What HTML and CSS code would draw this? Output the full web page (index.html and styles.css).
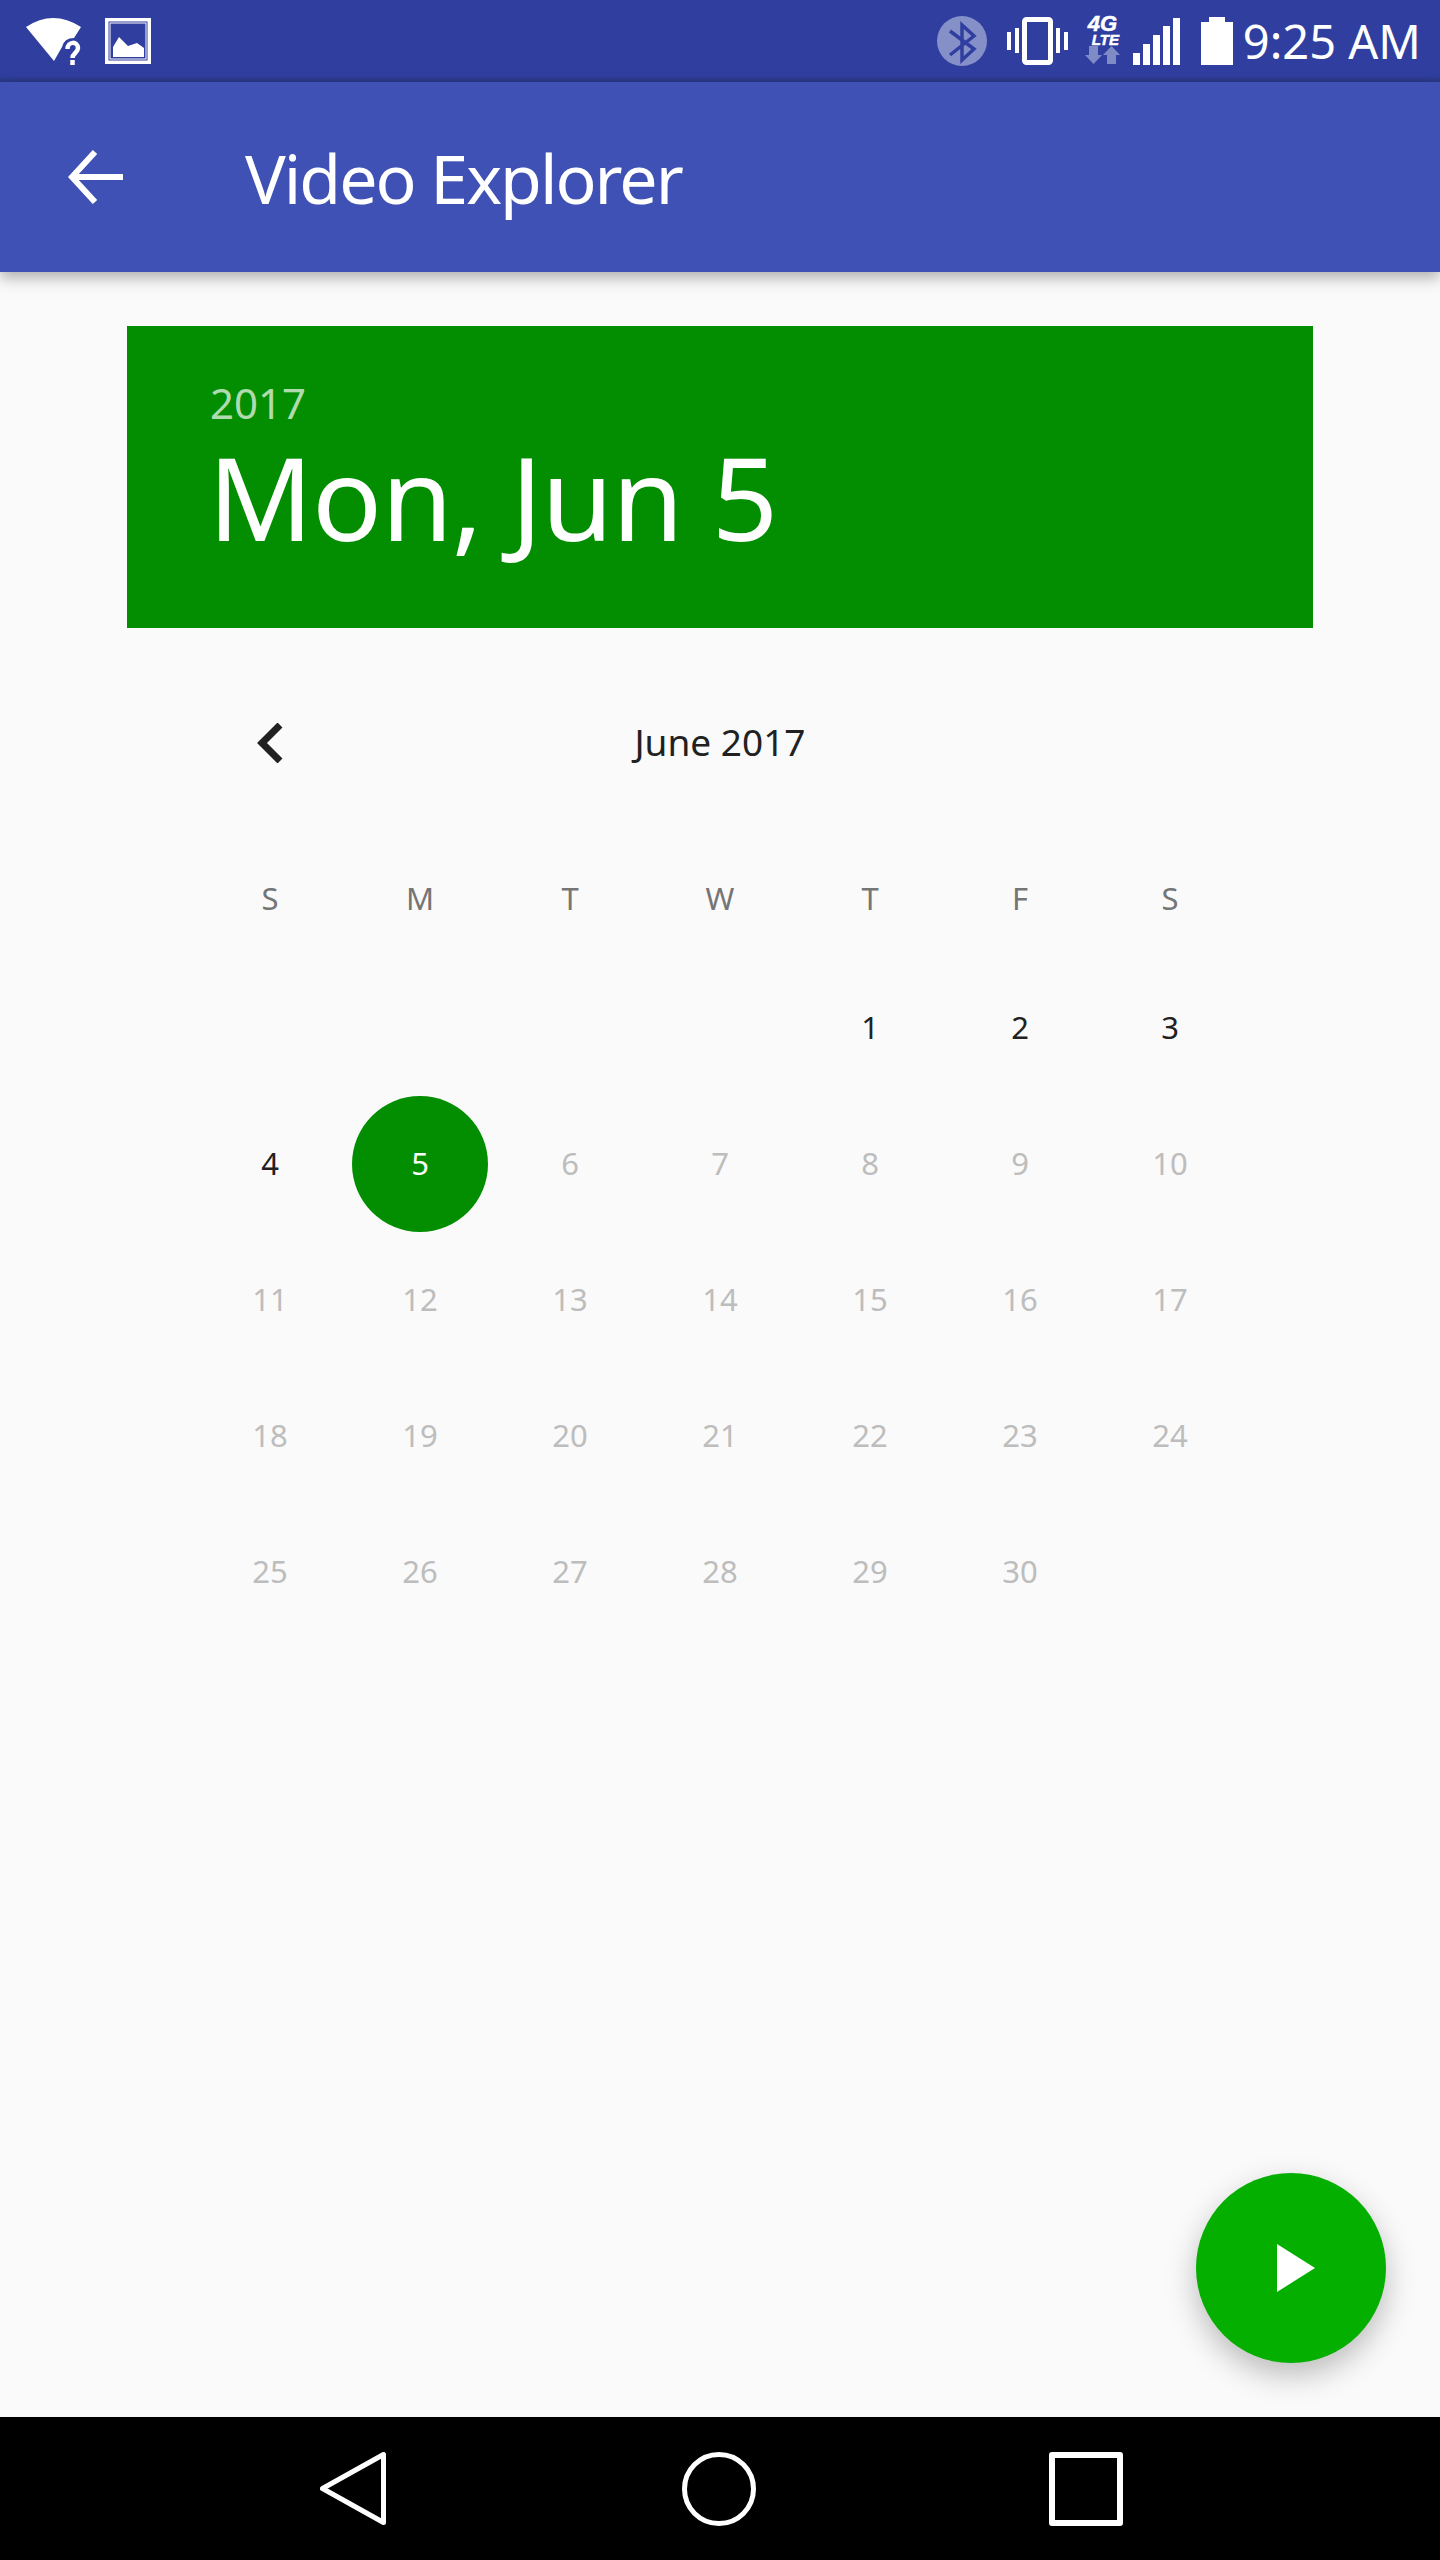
FILE: index.html
```html
<!DOCTYPE html>
<html lang="en">
<head>
    <meta charset="UTF-8">
    <title>Video Explorer</title>
    <link rel="stylesheet" href="styles.css">
</head>
<body>
    <div class="screen">
        <div class="status-bar">
            <div class="status-left">
                <svg class="icon-wifi" width="56" height="48" viewBox="0 0 56 48">
                    <path d="M0 10Q27 -8 55 10L48 21Q38 21 36 30L28 44Z" fill="#fff"/>
                    <path d="M41.500 32C41.500 24 52 24 52 31C52 36 46.500 36 46.500 41M46.500 43v5" fill="none" stroke="#fff" stroke-width="4.500"/>
                </svg>
                <svg class="icon-image" width="46" height="46" viewBox="0 0 46 46">
                    <rect x="1.750" y="1.750" width="42.500" height="42.500" fill="none" stroke="#fff" stroke-width="3.500"/>
                    <rect x="5" y="5" width="36" height="36" fill="none" stroke="#fff" stroke-width="1"/>
                    <path d="M8 39V29L14 19L23 28L32 25L39 30V39Z" fill="#fff"/>
                </svg>
            </div>
            <div class="status-right">
                <svg class="icon-bt" width="50" height="50" viewBox="0 0 50 50">
                    <circle cx="25" cy="25" r="25" fill="#8690c8"/>
                    <path d="M13 15L37 33L25 44V9L37 20L13 39" fill="none" stroke="#303f9f" stroke-width="3.500"/>
                </svg>
                <svg class="icon-vibrate" width="62" height="48" viewBox="0 0 62 48">
                    <rect x="17.500" y="2.500" width="26" height="43" rx="2" fill="none" stroke="#fff" stroke-width="5"/>
                    <path d="M0 15h4v18H0zM8 11h4v25H8zM49 11h4v25h-4zM57 15h4v18h-4z" fill="#fff"/>
                </svg>
                <div class="net">
                    <span class="net-4g">4G</span>
                    <span class="net-lte">LTE</span>
                    <svg width="35" height="18" viewBox="0 0 35 18">
                        <path d="M4 0h9v9h4L8.500 18L0 9h4zM22 18h9V9h4L26.500 0L18 9h4z" fill="#7f8bc4"/>
                    </svg>
                </div>
                <div class="signal">
                    <span class="bar bar-1"></span>
                    <span class="bar bar-2"></span>
                    <span class="bar bar-3"></span>
                    <span class="bar bar-4"></span>
                    <span class="bar bar-5"></span>
                </div>
                <div class="battery">
                    <span class="battery-cap"></span>
                    <span class="battery-body"></span>
                </div>
                <span class="clock">9:25 AM</span>
            </div>
        </div>

        <div class="app-bar">
            <svg class="back-arrow" width="56" height="54" viewBox="0 0 56 54">
                <path d="M55 27H4M27 2L4 27L27 52" fill="none" stroke="#fff" stroke-width="6"/>
            </svg>
            <span class="app-title">Video Explorer</span>
        </div>

        <div class="content">
            <div class="date-header">
                <div class="date-year">2017</div>
                <div class="date-full">Mon, Jun 5</div>
            </div>

            <div class="calendar">
                <div class="month-row">
                    <svg class="month-prev" width="26" height="40" viewBox="0 0 26 40">
                        <path d="M23 2L5 20L23 38" fill="none" stroke="#212121" stroke-width="7"/>
                    </svg>
                    <span class="month-name">June 2017</span>
                </div>
                <div class="week-row">
                    <span>S</span><span>M</span><span>T</span><span>W</span><span>T</span><span>F</span><span>S</span>
                </div>
                <div class="days">
                    <span></span><span></span><span></span><span></span>
                    <span class="day on">1</span><span class="day on">2</span><span class="day on">3</span>
                    <span class="day on">4</span><span class="day selected">5</span><span class="day">6</span><span class="day">7</span><span class="day">8</span><span class="day">9</span><span class="day">10</span>
                    <span class="day">11</span><span class="day">12</span><span class="day">13</span><span class="day">14</span><span class="day">15</span><span class="day">16</span><span class="day">17</span>
                    <span class="day">18</span><span class="day">19</span><span class="day">20</span><span class="day">21</span><span class="day">22</span><span class="day">23</span><span class="day">24</span>
                    <span class="day">25</span><span class="day">26</span><span class="day">27</span><span class="day">28</span><span class="day">29</span><span class="day">30</span><span></span>
                </div>
            </div>

            <div class="fab">
                <svg width="38" height="48" viewBox="0 0 38 48"><path d="M0 0L38 24L0 48Z" fill="#fff"/></svg>
            </div>
        </div>

        <div class="nav-bar">
            <svg class="nav-back" width="66" height="73" viewBox="0 0 66 73">
                <path d="M63.500 2.500V70.500L2.500 36.500Z" fill="none" stroke="#fff" stroke-width="5" stroke-linejoin="round"/>
            </svg>
            <svg class="nav-home" width="74" height="74" viewBox="0 0 74 74">
                <circle cx="37" cy="37" r="34.500" fill="none" stroke="#fff" stroke-width="5"/>
            </svg>
            <svg class="nav-recent" width="74" height="74" viewBox="0 0 74 74">
                <rect x="3" y="3" width="68" height="68" fill="none" stroke="#fff" stroke-width="6" stroke-linejoin="round"/>
            </svg>
        </div>
    </div>
</body>
</html>
```

FILE: styles.css
```css
* {
    box-sizing: border-box;
}
body {
    margin: 0;
    font-family: "Noto Sans", sans-serif;
    background: #fafafa;
}
.screen {
    width: 1440px;
    height: 2560px;
    display: flex;
    flex-direction: column;
    overflow: hidden;
}

/* status bar */
.status-bar {
    height: 82px;
    flex: none;
    display: flex;
    justify-content: space-between;
    align-items: center;
    padding: 0 19px 0 26px;
    background: linear-gradient(#303f9f 92%, #2a3785);
    color: #fff;
}
.status-left {
    display: flex;
    align-items: center;
    gap: 23px;
}
.status-right {
    display: flex;
    align-items: center;
}
.icon-vibrate {
    margin-left: 20px;
}
.net {
    width: 35px;
    margin: 0 0 5px 16px;
    display: flex;
    flex-direction: column;
    align-items: center;
    font-family: "Liberation Sans", sans-serif;
    font-weight: 700;
    font-style: italic;
    line-height: 1;
    -webkit-text-stroke: 0.5px #fff;
}
.net-4g {
    font-size: 22px;
    height: 19px;
}
.net-lte {
    font-size: 15px;
    height: 14px;
    margin-left: 6px;
}
.signal {
    display: flex;
    align-items: flex-end;
    gap: 3px;
    height: 47px;
    margin-left: 13px;
}
.bar {
    width: 7px;
    background: #fff;
}
.bar-1 { height: 12px; }
.bar-2 { height: 21px; }
.bar-3 { height: 30px; }
.bar-4 { height: 39px; }
.bar-5 { height: 47px; }
.battery {
    width: 32px;
    margin-left: 21px;
    display: flex;
    flex-direction: column;
    align-items: center;
}
.battery-cap {
    width: 16px;
    height: 5px;
    background: #fff;
}
.battery-body {
    width: 32px;
    height: 43px;
    background: #fff;
}
.clock {
    margin-left: 10px;
    font-size: 47px;
    line-height: 1;
}

/* app bar */
.app-bar {
    height: 190px;
    flex: none;
    display: flex;
    align-items: center;
    padding-left: 68px;
    background: #3f51b5;
    color: #fff;
    position: relative;
    z-index: 1;
    box-shadow: 0 6px 14px rgba(0,0,0,0.3);
}
.app-title {
    margin-left: 121px;
    font-size: 68px;
    letter-spacing: -2px;
}

/* content */
.content {
    flex: 1;
    position: relative;
    background: #fafafa;
    padding: 54px 127px 0;
}
.date-header {
    height: 302px;
    padding: 49px 0 0 83px;
    background: #028e00;
    color: #fff;
}
.date-year {
    font-size: 42px;
    line-height: 56px;
    color: rgba(255,255,255,0.7);
}
.date-full {
    margin-left: -2px;
    font-size: 116px;
    line-height: 130px;
    letter-spacing: -1.100px;
}
.calendar {
    margin: 0 68px;
}
.month-row {
    height: 231px;
    display: flex;
    justify-content: center;
    position: relative;
}
.month-prev {
    position: absolute;
    left: 62px;
    top: 95px;
}
.month-name {
    font-size: 37px;
    line-height: 228px;
    color: #212121;
}
.week-row,
.days {
    display: grid;
    grid-template-columns: repeat(7, 150px);
}
.week-row {
    height: 101px;
    font-size: 31px;
    line-height: 78px;
    text-align: center;
    color: #757575;
}
.days {
    grid-auto-rows: 136px;
    font-size: 31px;
}
.day {
    width: 136px;
    height: 136px;
    margin: 0 7px;
    padding-bottom: 2px;
    border-radius: 50%;
    display: flex;
    align-items: center;
    justify-content: center;
    color: #bdbdbd;
}
.day.on {
    color: #212121;
}
.day.selected {
    background: #028e00;
    color: #fff;
}
.fab {
    position: absolute;
    left: 1196px;
    top: 1901px;
    width: 190px;
    height: 190px;
    padding-left: 10px;
    border-radius: 50%;
    display: flex;
    align-items: center;
    justify-content: center;
    background: #04af00;
    box-shadow: 0 12px 30px rgba(0,0,0,0.25);
}

/* nav bar */
.nav-bar {
    height: 143px;
    flex: none;
    background: #000;
    display: flex;
    align-items: center;
}
.nav-back {
    margin-left: 320px;
}
.nav-home {
    margin-left: 296px;
}
.nav-recent {
    margin-left: 293px;
}
```
